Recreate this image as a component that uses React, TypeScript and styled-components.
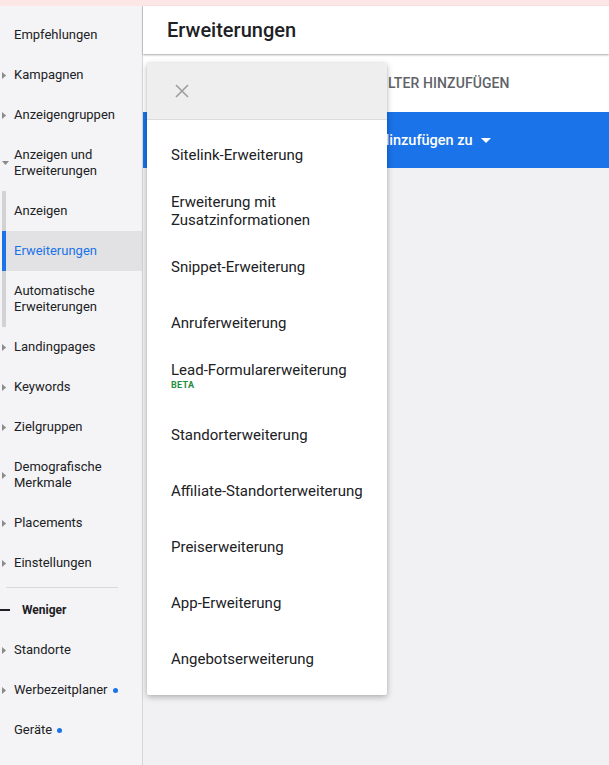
import React from 'react';
import styled, { createGlobalStyle } from 'styled-components';

const GlobalStyle = createGlobalStyle`
  html, body, #root {
    margin: 0;
    height: 100%;
    overflow: hidden;
  }
  body {
    font-family: Roboto, 'Liberation Sans', Arial, sans-serif;
    color: #202124;
    background: #f1f1f3;
  }
`;

const Page = styled.div`
  height: 100%;
  display: flex;
  flex-direction: column;
`;

const AlertStrip = styled.div`
  height: 6px;
  flex: none;
  background: #fde6e6;
`;

const Body = styled.div`
  flex: 1;
  display: flex;
  min-height: 0;
`;

const Sidebar = styled.nav`
  width: 142px;
  flex: none;
  background: #f4f4f6;
  border-right: 1px solid #d6d6d8;
  padding-top: 9px;
  overflow: hidden;
`;

const NavRow = styled.div<{ $tall?: boolean; $sub?: boolean; $selected?: boolean }>`
  display: flex;
  align-items: center;
  height: ${({ $tall }) => ($tall ? 56 : 40)}px;
  margin-left: ${({ $sub }) => ($sub ? 2 : 0)}px;
  border-left: ${({ $sub, $selected }) =>
    $sub ? `4px solid ${$selected ? '#1a73e8' : '#d2d2d4'}` : 'none'};
  padding-left: ${({ $sub }) => ($sub ? 8 : 2)}px;
  padding-right: 10px;
  background: ${({ $selected }) => ($selected ? '#e2e2e4' : 'transparent')};
  color: ${({ $selected }) => ($selected ? '#1a73e8' : '#202124')};
  font-size: 13px;
  line-height: 16px;
`;

const ArrowSlot = styled.span`
  width: 12px;
  flex: none;
  display: flex;
  align-items: center;
  color: #8a8a8a;
`;

const NavLabel = styled.span`
  display: flex;
  align-items: center;
  gap: 5px;
`;

const Dot = styled.span`
  width: 5px;
  height: 5px;
  border-radius: 50%;
  background: #1a73e8;
  flex: none;
`;

const Divider = styled.div`
  padding: 4px 24px 2px 6px;
  &::after {
    content: '';
    display: block;
    height: 1px;
    background: #d8d8da;
  }
`;

const LessRow = styled.div`
  display: flex;
  align-items: center;
  gap: 12px;
  height: 40px;
  font-size: 12px;
  font-weight: 700;
`;

const Dash = styled.span`
  width: 10px;
  height: 2px;
  background: #202124;
`;

const Main = styled.main`
  flex: 1;
  position: relative;
  display: flex;
  flex-direction: column;
  background: #f1f1f3;
`;

const Header = styled.header`
  height: 48px;
  flex: none;
  display: flex;
  align-items: center;
  padding-left: 24px;
  background: #fff;
  font-size: 20px;
  font-weight: 500;
  box-shadow: 0 1px 2px rgba(0, 0, 0, 0.35);
  position: relative;
  z-index: 1;
`;

const Toolbar = styled.div`
  height: 58px;
  flex: none;
  display: flex;
  align-items: center;
  padding-left: 233px;
  background: #fff;
  color: #5f6368;
  font-size: 14px;
  font-weight: 500;
  letter-spacing: 0.1px;
`;

const ActionBar = styled.div`
  height: 56px;
  flex: none;
  display: flex;
  align-items: center;
  gap: 8px;
  padding-left: 236px;
  background: #1a73e8;
  color: #fff;
  font-size: 14.5px;
  font-weight: 500;
`;

const Menu = styled.div`
  position: absolute;
  left: 4px;
  top: 57px;
  width: 240px;
  z-index: 2;
  background: #fff;
  border-radius: 2px;
  box-shadow: 0 2px 6px rgba(0, 0, 0, 0.28), 0 0 2px rgba(0, 0, 0, 0.08);
  padding-bottom: 8px;
`;

const MenuHead = styled.div`
  height: 56px;
  display: flex;
  align-items: center;
  padding-left: 28px;
  background: #eeeeef;
  border-bottom: 1px solid #dcdcdc;
  margin-bottom: 7px;
`;

const MenuItem = styled.div<{ $badge?: boolean }>`
  height: 56px;
  box-sizing: border-box;
  display: flex;
  flex-direction: column;
  justify-content: center;
  padding: 0 12px ${({ $badge }) => ($badge ? 6 : 0)}px 24px;
  font-size: 15px;
  line-height: 18px;
  color: #202124;
`;

const Beta = styled.span`
  font-size: 9px;
  line-height: 12px;
  font-weight: 700;
  color: #1e8e3e;
  letter-spacing: 0.3px;
`;

const RightArrow = () => (
  <svg width="4" height="7" viewBox="0 0 4 7">
    <path d="M0 0 L4 3.5 L0 7 Z" fill="currentColor" />
  </svg>
);

const DownArrow = () => (
  <svg width="7" height="4" viewBox="0 0 7 4">
    <path d="M0 0 L7 0 L3.5 4 Z" fill="currentColor" />
  </svg>
);

interface NavEntry {
  label: string;
  arrow?: 'right' | 'down';
  tall?: boolean;
  sub?: boolean;
  selected?: boolean;
  dot?: boolean;
}

const topNav: NavEntry[] = [
  { label: 'Empfehlungen' },
  { label: 'Kampagnen', arrow: 'right' },
  { label: 'Anzeigengruppen', arrow: 'right' },
  { label: 'Anzeigen und Erweiterungen', arrow: 'down', tall: true },
  { label: 'Anzeigen', sub: true },
  { label: 'Erweiterungen', sub: true, selected: true },
  { label: 'Automatische Erweiterungen', sub: true, tall: true },
  { label: 'Landingpages', arrow: 'right' },
  { label: 'Keywords', arrow: 'right' },
  { label: 'Zielgruppen', arrow: 'right' },
  { label: 'Demografische Merkmale', arrow: 'right', tall: true },
  { label: 'Placements', arrow: 'right' },
  { label: 'Einstellungen', arrow: 'right' },
];

const moreNav: NavEntry[] = [
  { label: 'Standorte', arrow: 'right' },
  { label: 'Werbezeitplaner', arrow: 'right', dot: true },
  { label: 'Geräte', dot: true },
];

const menuItems = [
  'Sitelink-Erweiterung',
  'Erweiterung mit Zusatzinformationen',
  'Snippet-Erweiterung',
  'Anruferweiterung',
  'Lead-Formularerweiterung',
  'Standorterweiterung',
  'Affiliate-Standorterweiterung',
  'Preiserweiterung',
  'App-Erweiterung',
  'Angebotserweiterung',
];

const renderNav = (entry: NavEntry) => (
  <NavRow key={entry.label} $tall={entry.tall} $sub={entry.sub} $selected={entry.selected}>
    {!entry.sub && (
      <ArrowSlot>
        {entry.arrow === 'right' && <RightArrow />}
        {entry.arrow === 'down' && <DownArrow />}
      </ArrowSlot>
    )}
    <NavLabel>
      {entry.label}
      {entry.dot && <Dot />}
    </NavLabel>
  </NavRow>
);

const App = () => {
  return (
    <Page>
      <GlobalStyle />
      <AlertStrip />
      <Body>
        <Sidebar>
          {topNav.map(renderNav)}
          <Divider />
          <LessRow>
            <Dash />
            Weniger
          </LessRow>
          {moreNav.map(renderNav)}
        </Sidebar>
        <Main>
          <Header>Erweiterungen</Header>
          <Toolbar>FILTER HINZUFÜGEN</Toolbar>
          <ActionBar>
            Hinzufügen zu
            <svg width="10" height="5" viewBox="0 0 10 5">
              <path d="M0 0 L10 0 L5 5 Z" fill="#fff" />
            </svg>
          </ActionBar>
          <Menu>
            <MenuHead>
              <svg width="14" height="14" viewBox="0 0 14 14">
                <path d="M1 1 L13 13 M13 1 L1 13" stroke="#9e9e9e" strokeWidth="1.6" />
              </svg>
            </MenuHead>
            {menuItems.map(item => {
              const badge = item === 'Lead-Formularerweiterung';
              return (
                <MenuItem key={item} $badge={badge}>
                  {item}
                  {badge && <Beta>BETA</Beta>}
                </MenuItem>
              );
            })}
          </Menu>
        </Main>
      </Body>
    </Page>
  );
};

export default App;
